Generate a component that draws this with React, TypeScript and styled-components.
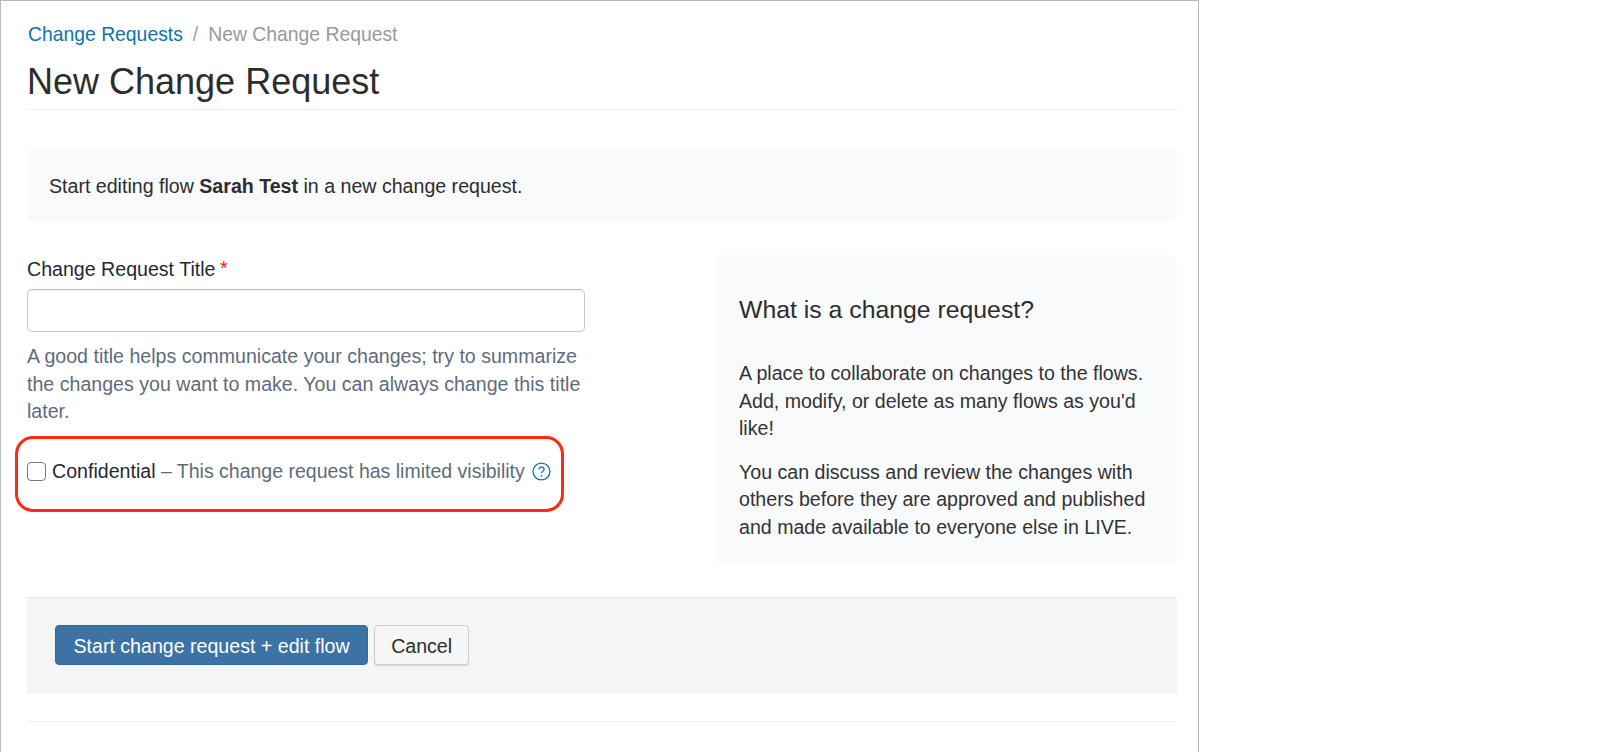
import React from "react";
import styled, { createGlobalStyle } from "styled-components";

const Global = createGlobalStyle`
  html, body { margin: 0; padding: 0; background: #fff; }
  body { font-family: "Liberation Sans", Arial, sans-serif; font-size: 19.6px; color: #2d2d2d; overflow: hidden; }
  * { box-sizing: border-box; }
`;

const Frame = styled.div`
  width: 1199px;
  height: 752px;
  border: solid #b9b9b9;
  border-width: 1px 1px 0 1px;
  padding: 0 21px 0 26px;
  overflow: hidden;
`;

const Crumbs = styled.nav`
  display: flex;
  gap: 10px;
  height: 24px;
  margin: 21px 0 0 1px;
  line-height: 24px;
  font-size: 19.35px;
`;
const CrumbLink = styled.a`
  color: #0a75ad;
`;
const CrumbSep = styled.span`
  color: #a0a0a0;
`;
const CrumbCurrent = styled.span`
  color: #999;
`;

const PageHeader = styled.header`
  height: 64px;
  border-bottom: 1px solid #ececec;
`;
const Title = styled.h1`
  margin: 0;
  padding-top: 18px;
  font-size: 36px;
  line-height: 36px;
  font-weight: 400;
  color: #2d2d2d;
`;

const Callout = styled.div`
  margin-top: 39px;
  height: 72px;
  padding: 2px 22px 0;
  display: flex;
  align-items: center;
  background: #f9fafb;
  border-radius: 6px;
  white-space: pre;
`;

const Columns = styled.div`
  display: flex;
  justify-content: space-between;
  align-items: flex-start;
  margin-top: 34px;
`;
const FormCol = styled.div`
  width: 558px;
`;
const Label = styled.label`
  display: block;
  height: 26px;
  margin-top: 1px;
  line-height: 26px;
  color: #1f2933;
`;
const Star = styled.span`
  position: relative;
  top: -1px;
  margin-left: -1px;
  font-size: 19.6px;
  line-height: 1;
  color: #e3241b;
`;
const TextInput = styled.input`
  display: block;
  width: 558px;
  height: 43px;
  margin-top: 7px;
  border: 1px solid #c4c6c8;
  border-top-color: #bdbfc1;
  border-radius: 5px;
  background: #fff;
  box-shadow: inset 0 1px 1px rgba(0, 0, 0, 0.05);
`;
const Help = styled.p`
  margin: 11px 0 0;
  line-height: 27.6px;
  color: #5f6b7a;
`;

const CheckRow = styled.div`
  position: relative;
  display: flex;
  align-items: center;
  height: 28px;
  margin-top: 32px;
`;
const Box = styled.span`
  width: 19px;
  height: 19px;
  margin-right: 6px;
  border: 1.5px solid #767b80;
  border-radius: 4px;
  background: #fff;
  flex: none;
`;
const Conf = styled.span`
  color: #1f2933;
  white-space: pre;
`;
const ConfNote = styled.span`
  font-size: 19.5px;
  color: #5f6b7a;
  white-space: pre;
`;
const HelpIcon = styled.svg`
  width: 19px;
  height: 19px;
  margin-left: 7px;
  flex: none;
`;
const Highlight = styled.div`
  position: absolute;
  left: -12px;
  top: -22px;
  width: 549px;
  height: 76px;
  border: 3px solid #fb2a13;
  border-radius: 18px;
  pointer-events: none;
`;

const Side = styled.aside`
  width: 460px;
  height: 309px;
  padding: 41px 22px 0;
  background: #f9fafb;
  border-radius: 6px;
`;
const SideTitle = styled.h3`
  margin: 0 0 36px;
  font-size: 24.8px;
  line-height: 28px;
  font-weight: 400;
  color: #2d2d2d;
`;
const SideText = styled.p`
  margin: 0 0 16px;
  line-height: 27.6px;
  color: #333;
`;

const Footer = styled.div`
  display: flex;
  gap: 6px;
  margin-top: 33px;
  height: 97px;
  padding: 27px 28px 0;
  background: #f5f5f5;
  border-top: 1px solid #e6e6e6;
`;
const Button = styled.button<{ $primary?: boolean }>`
  height: 40px;
  padding: 2px ${(p) => (p.$primary ? 17.5 : 16)}px 0;
  font: inherit;
  border-radius: 4px;
  border: 1px solid ${(p) => (p.$primary ? "#2e6da4" : "#cfcfcf")};
  background: ${(p) => (p.$primary ? "#3d72a4" : "#f6f6f6")};
  color: ${(p) => (p.$primary ? "#fff" : "#2d2d2d")};
  box-shadow: ${(p) => (p.$primary ? "none" : "0 1px 1px rgba(0,0,0,.15)")};
`;
const Rule = styled.hr`
  margin: 27px 0 0;
  border: 0;
  border-top: 1px solid #ececec;
`;

export default function App() {
  return (
    <Frame>
      <Global />
      <Crumbs>
        <CrumbLink>Change Requests</CrumbLink>
        <CrumbSep>/</CrumbSep>
        <CrumbCurrent>New Change Request</CrumbCurrent>
      </Crumbs>
      <PageHeader>
        <Title>New Change Request</Title>
      </PageHeader>
      <Callout>
        <span>
          Start editing flow <b>Sarah Test</b> in a new change request.
        </span>
      </Callout>
      <Columns>
        <FormCol>
          <Label>
            Change Request Title <Star>*</Star>
          </Label>
          <TextInput />
          <Help>
            A good title helps communicate your changes; try to summarize the changes you want to make. You can always
            change this title later.
          </Help>
          <CheckRow>
            <Box />
            <Conf>Confidential</Conf>
            <ConfNote> – This change request has limited visibility</ConfNote>
            <HelpIcon viewBox="0 0 18 18" fill="none">
              <circle cx="9" cy="9" r="8" stroke="#0a75ad" strokeWidth="1.2" />
              <path
                d="M6.5 7.1c0-1.4 1.1-2.3 2.5-2.3s2.5.9 2.5 2.1c0 1.9-2.5 1.9-2.5 3.7"
                stroke="#0a75ad"
                strokeWidth="1.2"
              />
              <circle cx="9" cy="13.1" r=".85" fill="#0a75ad" />
            </HelpIcon>
            <Highlight />
          </CheckRow>
        </FormCol>
        <Side>
          <SideTitle>What is a change request?</SideTitle>
          <SideText>A place to collaborate on changes to the flows. Add, modify, or delete as many flows as you'd like!</SideText>
          <SideText>You can discuss and review the changes with others before they are approved and published and made available to everyone else in LIVE.</SideText>
        </Side>
      </Columns>
      <Footer>
        <Button $primary>Start change request + edit flow</Button>
        <Button>Cancel</Button>
      </Footer>
      <Rule />
    </Frame>
  );
}
